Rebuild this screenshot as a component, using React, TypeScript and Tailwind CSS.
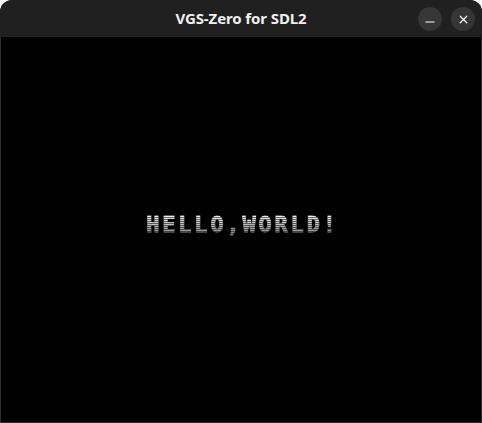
import { X, Minus } from "lucide-react";

export default function App() {
  return (
    <div className="w-[482px] h-[423px] bg-white">
      <div className="flex flex-col h-full rounded-t-[12px] overflow-hidden bg-[#2e2e2e]">
        {/* Title bar */}
        <div className="relative h-[37px] shrink-0 flex items-center justify-center bg-[#202020]">
          <span className="text-[15px] font-bold text-[#f0f0f0] font-['Noto_Sans',sans-serif] tracking-[-0.1px]">
            VGS-Zero for SDL2
          </span>
          <div className="absolute right-[7px] top-[7px] flex gap-[9px]">
            <button className="w-[24px] h-[24px] rounded-full bg-[#363636] flex items-center justify-center">
              <Minus className="w-[14px] h-[14px] text-white mt-[5px]" strokeWidth={2} />
            </button>
            <button className="w-[24px] h-[24px] rounded-full bg-[#363636] flex items-center justify-center">
              <X className="w-[13px] h-[13px] text-white" strokeWidth={2.2} />
            </button>
          </div>
        </div>

        {/* Game screen */}
        <div className="flex-1 mx-px mb-px bg-black flex items-center justify-center">
          <span className="-mt-[9px] pl-[3px] text-[22px] leading-[22px] font-bold tracking-[2.8px] font-['DejaVu_Sans_Mono',monospace] bg-clip-text text-transparent [-webkit-text-stroke:0.8px_transparent] [background-image:repeating-linear-gradient(to_bottom,transparent_0px,transparent_1px,rgba(0,0,0,0.55)_1px,rgba(0,0,0,0.55)_2px),linear-gradient(to_bottom,#ffffff,#b0b0b0_60%,#7a7a7a)]">
            HELLO,WORLD!
          </span>
        </div>
      </div>
    </div>
  );
}
